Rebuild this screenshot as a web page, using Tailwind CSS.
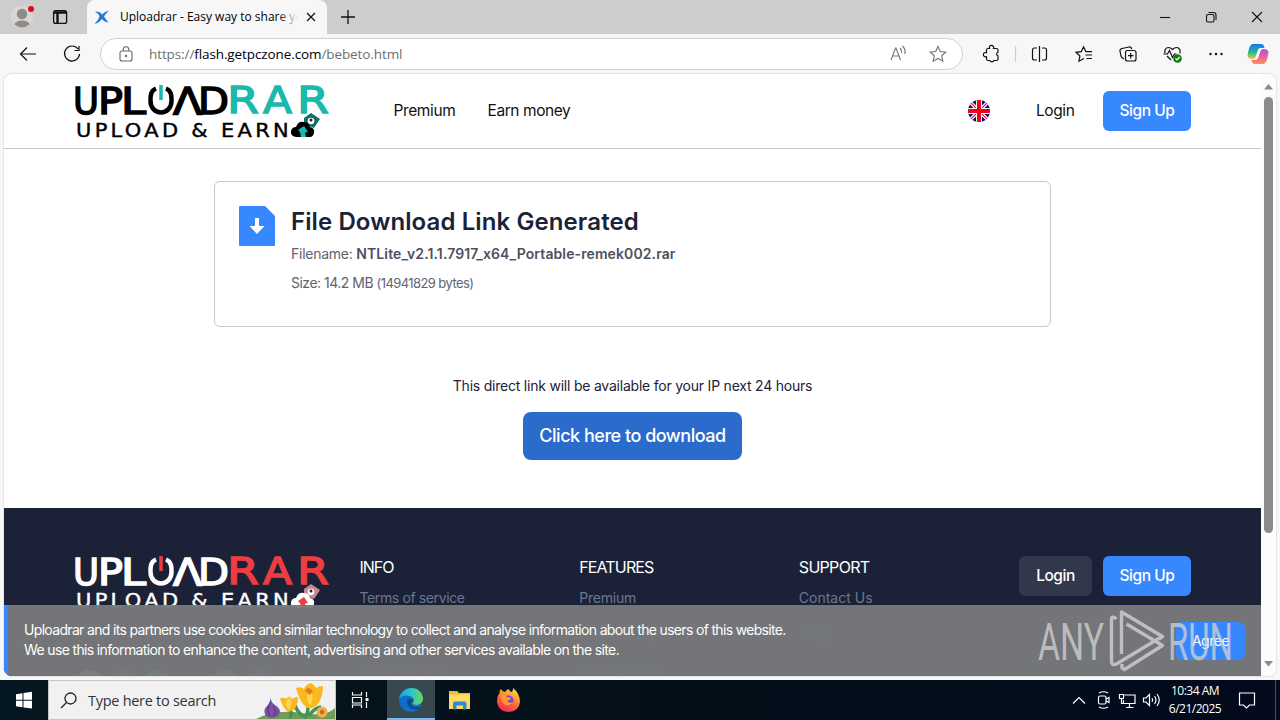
<!DOCTYPE html>
<html lang="en">
<head>
  <meta charset="UTF-8" />
  <meta name="viewport" content="width=device-width, initial-scale=1.0" />
  <title>Uploadrar - Easy way to share your files</title>
  <script src="https://cdn.jsdelivr.net/npm/@tailwindcss/browser@4"></script>
</head>
<body class="w-[1280px] h-[720px] overflow-hidden flex flex-col bg-[#f7f7f7] font-['Open_Sans',sans-serif] text-black">

  <!-- Tab strip -->
  <div class="h-[34px] shrink-0 bg-[#cdcdcd] flex items-center">
    <svg class="w-[87px] h-[34px] shrink-0" viewBox="0 0 87 34" fill="none">
      <circle cx="22" cy="17" r="11" fill="#d9d7d5" />
      <circle cx="22" cy="14" r="5.2" fill="#8f8b88" />
      <path d="M14.500 24.500a7.500 4 0 0 1 15 0q-3.500 3-7.500 3t-7.500-3z" fill="#8f8b88" />
      <circle cx="31" cy="9" r="3" fill="#e00b1c" />
      <rect x="53.600" y="10.600" width="13" height="12.800" rx="2" stroke="#111" stroke-width="1.300" />
      <path d="M54 12.500h12.500M57.500 13v10" stroke="#111" stroke-width="2.400" />
    </svg>
    <div class="w-[240px] h-[34px] bg-[#f7f7f7] rounded-t-lg flex items-center pl-[7px]">
      <svg class="w-4 h-4 shrink-0" viewBox="0 0 16 16">
        <path d="M1 2.500q5-.500 7 3Q10 3 15 1.500q-4 4-5 6 2 3 4.500 6-4.500-.500-6.500-3.500-3 4-7.500 5 4-4 5-7.500Q4 4 1 2.500z" fill="#2678d4" />
      </svg>
      <div class="relative w-[178px] ml-2.5 text-[12px] whitespace-nowrap overflow-hidden">
        Uploadrar - Easy way to share your
        <div class="absolute right-0 top-0 w-5 h-full bg-linear-to-r from-transparent to-[#f7f7f7]"></div>
      </div>
      <svg class="w-2.5 h-2.5 ml-2" viewBox="0 0 10 10" stroke="#111" stroke-width="1.200"><path d="M1 1l8 8M9 1l-8 8" /></svg>
    </div>
    <svg class="w-[14px] h-[14px] ml-[14px]" viewBox="0 0 14 14" stroke="#111" stroke-width="1.300"><path d="M0 7h14M7 0v14" /></svg>
    <svg class="w-[120px] h-[34px] ml-auto" viewBox="1160 0 120 34" fill="none" stroke="#111" stroke-width="1.100">
      <path d="M1160 17.500h10" />
      <rect x="1206.500" y="14.500" width="7.500" height="7.500" rx="1.500" />
      <path d="M1208.500 12.500h5q2.500 0 2.500 2.500v5" />
      <path d="M1252 12l10 10M1262 12l-10 10" />
    </svg>
  </div>

  <!-- Toolbar -->
  <div class="h-10 shrink-0 flex items-center">
    <svg class="w-[100px] h-10 shrink-0" viewBox="0 34 100 40" fill="none" stroke="#111" stroke-width="1.200">
      <path d="M36 54H20.500M27 47.500L20.500 54l6.500 6.500" />
      <path d="M78 49a7.500 7.500 0 1 0 1.500 5M79 46v4.500h-4.500" />
    </svg>
    <div class="w-[863px] h-8 bg-white border border-[#d2d2d2] rounded-full flex items-center px-[18px]">
      <svg class="w-[14px] h-4" viewBox="0 0 14 16" fill="none" stroke="#666" stroke-width="1.100">
        <rect x="1" y="5" width="12" height="10" rx="2" /><path d="M4.200 5V3.500a2.800 2.800 0 0 1 5.600 0V5" /><circle cx="7" cy="10" r=".6" fill="#555" />
      </svg>
      <div class="ml-4 text-[13.5px] tracking-[-0.1px] text-[#6f6f6f] whitespace-nowrap">https://<span class="text-black">flash.getpczone.com</span>/bebeto.html</div>
      <svg class="w-[60px] h-5 ml-auto mr-[-6px]" viewBox="890 44 60 20" fill="none" stroke="#777" stroke-width="1.150">
        <path d="M891 60l4.500-12h.5l4.500 12M892.800 56h6M900 48q2 2 1.500 5M902.500 46q3.500 3.500 2.300 8" />
        <path d="M938 46.500l2.300 5 5.400.600-4 3.700 1.100 5.400-4.800-2.700-4.800 2.700 1.100-5.400-4-3.700 5.400-.600z" />
      </svg>
    </div>
    <svg class="w-[317px] h-10 shrink-0" viewBox="963 34 317 40" fill="none" stroke="#111" stroke-width="1.200">
      <defs>
        <linearGradient id="cpA" x1="0" y1="0" x2="0" y2="1"><stop offset="0" stop-color="#1478e8" /><stop offset=".55" stop-color="#22b8a0" /><stop offset="1" stop-color="#ffc62b" /></linearGradient>
        <linearGradient id="cpB" x1="0" y1="0" x2="0" y2="1"><stop offset="0" stop-color="#a055ee" /><stop offset=".5" stop-color="#ed5f9c" /><stop offset="1" stop-color="#ff9254" /></linearGradient>
      </defs>
      <path d="M988 48.500h1.500a2.200 2.200 0 1 1 4 0h3q1.500 0 1.500 1.500v2.200a2 2 0 0 0 0 3.800v3q0 1.500-1.500 1.500h-2.600a2.200 2.200 0 0 1-4 0H988q-1.500 0-1.500-1.500v-2.300a2.200 2.200 0 1 1 0-4V50q0-1.500 1.500-1.500z" />
      <path d="M1015.500 46v16" stroke="#ccc" />
      <path d="M1037 48h-2.500q-2 0-2 2v8q0 2 2 2h2.500M1042 48h2.500q2 0 2 2v8q0 2-2 2h-2.500M1039.500 46v16" />
      <path d="M1084 58.500l-.5.200-4.600 2.500 1-5.200-3.900-3.700 5.300-.700 2.300-4.800 2.300 4.800 1 .1M1086.500 51.600h5.500M1085.500 55h6.500M1086.500 58.500h5.500" />
      <path d="M1124 59q-2.500-1-3-3l-1-5q-.3-2 2-2.500l7-1.500q2-.3 2.800 2" />
      <rect x="1125.500" y="50.500" width="10.500" height="10.500" rx="2" /><path d="M1130.700 53v5.500M1128 55.700h5.500" />
      <path d="M1171 60l-4-4M1165 53c-1-3 1-5.500 3.500-5.500 2 0 3 1 4 2 1-1 2-2 4-2 3 0 4.500 3 3.200 6M1163.500 54h4l2-3.500 3 7 2-3.500h2" />
      <circle cx="1177.500" cy="58.500" r="4.300" fill="#107c10" stroke="none" /><path d="M1175.500 58.500l1.500 1.500 2.700-3" stroke="#fff" />
      <g fill="#111" stroke="none"><circle cx="1210.500" cy="54" r="1.200" /><circle cx="1216" cy="54" r="1.200" /><circle cx="1221.500" cy="54" r="1.200" /></g>
      <path d="M1253 44h8q3 0 3.500 4h-4q-2 0-2.600 2l-2 6q-.8 3-3.500 3-4.500 0-4.800-3-.2-1.500 1.300-7 1.500-5 4.100-5z" fill="url(#cpA)" stroke="none" />
      <path d="M1263 64h-8q-3 0-3.500-4h4q2 0 2.600-2l2-6q.8-3 3.500-3 4.500 0 4.800 3 .2 1.500-1.300 7-1.500 5-4.100 5z" fill="url(#cpB)" stroke="none" />
    </svg>
  </div>

  <!-- Web page -->
  <div class="h-[602px] mx-1 shrink-0 flex bg-white rounded-lg overflow-hidden shadow-[0_0_2px_#bbb] font-[Inter,sans-serif]">
    <div class="relative w-[1257px] shrink-0 overflow-hidden">
      <header class="h-[75px] border-b border-[#c8c8c8] flex items-center pl-[70px] pr-[70px] text-[15.5px] text-[#111]">
        <svg class="w-[256px] h-[56px] shrink-0 overflow-visible" viewBox="74 83 256 56" font-family="DejaVu Sans">
          <g font-size="37" fill="#000" stroke="#000" stroke-width="1.500">
            <text x="73" y="113.500" textLength="26" lengthAdjust="spacingAndGlyphs">U</text>
            <text x="98" y="113.500" textLength="25" lengthAdjust="spacingAndGlyphs">P</text>
            <text x="121" y="113.500" textLength="25" lengthAdjust="spacingAndGlyphs">L</text>
            <text x="173" y="113.500" textLength="29" lengthAdjust="spacingAndGlyphs">Λ</text>
            <text x="198" y="113.500" textLength="31" lengthAdjust="spacingAndGlyphs">D</text>
          </g>
          <g font-size="37" fill="#19b9ad" stroke="#19b9ad" stroke-width="1.300">
            <text x="227" y="113" textLength="32" lengthAdjust="spacingAndGlyphs">R</text>
            <text x="263" y="113" textLength="29" lengthAdjust="spacingAndGlyphs">A</text>
            <text x="297" y="113" textLength="32" lengthAdjust="spacingAndGlyphs">R</text>
          </g>
          <path d="M156 88.500C150 91 150.500 97 150.500 101c0 7 5 11.500 10.500 11.500s10.500-4.500 10.500-11.500c0-4 .5-10-5.500-12.500" fill="none" stroke="#000" stroke-width="4.500" />
          <path d="M161 85v15" stroke="#19b9ad" stroke-width="3.500" />
          <text x="76" y="136.500" font-size="19" fill="#000" stroke="#000" stroke-width=".4" letter-spacing="3" textLength="216" lengthAdjust="spacingAndGlyphs">UPLOAD &amp; EARN</text>
          <path d="M304 118l7-5 9 6-6 9-10-4z" fill="#126e68" /><circle cx="311" cy="121" r="3.300" fill="#fff" /><circle cx="311" cy="120" r="1.500" fill="#222" />
          <path d="M296 137q-6-1-5-6 1-4 5-4 2-6 8-5 5 0 6 5 5 1 4 6-1 4-4 4z" fill="#000" />
          <path d="M298 130l6-4 4 6-3 .5 1 4.500h-5l-1-5z" fill="#19b9ad" />
        </svg>
        <nav class="flex gap-8 ml-[63.500px]">
          <a class="w-[62px] tracking-[-0.38px] whitespace-nowrap">Premium</a>
          <a class="tracking-[-0.42px]">Earn money</a>
        </nav>
        <svg class="w-[22px] h-[22px] ml-auto mr-[46px]" viewBox="0 0 22 22">
          <clipPath id="flag"><circle cx="11" cy="11" r="11" /></clipPath>
          <g clip-path="url(#flag)">
            <path d="M0 0h22v22H0z" fill="#10107c" />
            <path d="M0 0l22 22M22 0L0 22" stroke="#fff" stroke-width="3.400" /><path d="M0 0l22 22M22 0L0 22" stroke="#e8112d" stroke-width="1.200" />
            <path d="M11 0v22M0 11h22" stroke="#fff" stroke-width="6" /><path d="M11 0v22M0 11h22" stroke="#f00018" stroke-width="4" />
          </g>
        </svg>
        <a class="w-[39px] tracking-[-0.42px] whitespace-nowrap">Login</a>
        <a class="w-[88px] h-10 ml-7 rounded-md bg-[#3787ff] text-white font-medium tracking-[-0.45px] flex items-center justify-center">Sign Up</a>
      </header>

      <main class="h-[359px] pt-8 flex flex-col items-center text-[#1b2238]">
        <section class="w-[837px] h-[146px] border border-[#c5c8cc] rounded-md p-6 flex gap-4">
          <svg class="w-9 h-10 shrink-0" viewBox="0 0 36 40">
            <path d="M1 0h25l10 10v29q0 1-1 1H1q-1 0-1-1V1q0-1 1-1z" fill="#3787ff" />
            <path d="M16 12h4v8h5.500L18 28l-7.500-8H16z" fill="#fff" />
          </svg>
          <div class="text-[14px] text-[#5f6470] whitespace-nowrap">
            <h1 class="pt-px text-[24px] leading-[30px] font-semibold text-[#1b2238] tracking-[0.1px]">File Download Link Generated</h1>
            <p class="mt-[6px] leading-[22px] tracking-[-0.25px]">Filename: <b class="font-semibold text-[#4d515e] tracking-[0.11px]">NTLite_v2.1.1.7917_x64_Portable-remek002.rar</b></p>
            <p class="mt-[7px] leading-[22px] tracking-[-0.5px]">Size: 14.2 MB <span class="text-[13px] tracking-[-0.58px]">(14941829 bytes)</span></p>
          </div>
        </section>
        <p class="mt-12 text-[14px] leading-[21px] tracking-[-0.22px]">This direct link will be available for your IP next 24 hours</p>
        <a class="mt-4 w-[219px] h-12 pb-px rounded-lg bg-[#2b6bcc] text-white text-[18px] font-medium tracking-[-0.48px] flex items-center justify-center">Click here to download</a>
      </main>

      <footer class="h-[168px] bg-[#1b2238] pl-[70px] pr-[70px] pt-12 flex text-white">
        <div class="w-[256px] shrink-0">
          <svg class="w-[256px] h-[56px] mt-[-2px] overflow-visible" viewBox="74 83 256 56" font-family="DejaVu Sans">
            <g font-size="37" fill="#fff" stroke="#fff" stroke-width="1.500">
              <text x="73" y="113.500" textLength="26" lengthAdjust="spacingAndGlyphs">U</text>
              <text x="98" y="113.500" textLength="25" lengthAdjust="spacingAndGlyphs">P</text>
              <text x="121" y="113.500" textLength="25" lengthAdjust="spacingAndGlyphs">L</text>
              <text x="173" y="113.500" textLength="29" lengthAdjust="spacingAndGlyphs">Λ</text>
              <text x="198" y="113.500" textLength="31" lengthAdjust="spacingAndGlyphs">D</text>
            </g>
            <g font-size="37" fill="#ee3d42" stroke="#ee3d42" stroke-width="1.300">
              <text x="227" y="113" textLength="32" lengthAdjust="spacingAndGlyphs">R</text>
              <text x="263" y="113" textLength="29" lengthAdjust="spacingAndGlyphs">A</text>
              <text x="297" y="113" textLength="32" lengthAdjust="spacingAndGlyphs">R</text>
            </g>
            <path d="M156 88.500C150 91 150.500 97 150.500 101c0 7 5 11.500 10.500 11.500s10.500-4.500 10.500-11.500c0-4 .5-10-5.500-12.500" fill="none" stroke="#fff" stroke-width="4.500" />
            <path d="M161 85v15" stroke="#ee3d42" stroke-width="3.500" />
            <text x="76" y="136" font-size="19" fill="#fff" stroke="#fff" stroke-width=".4" letter-spacing="3" textLength="216" lengthAdjust="spacingAndGlyphs">UPLOAD &amp; EARN</text>
            <path d="M304 118l7-5 9 6-6 9-10-4z" fill="#c58a90" /><circle cx="311" cy="121" r="3.300" fill="#fff" /><circle cx="311" cy="120" r="1.500" fill="#222" />
            <path d="M296 137q-6-1-5-6 1-4 5-4 2-6 8-5 5 0 6 5 5 1 4 6-1 4-4 4z" fill="#fff" />
            <path d="M298 130l6-4 4 6-3 .5 1 4.500h-5l-1-5z" fill="#ee3d42" />
          </svg>
          <div class="flex gap-[6px] pl-px mt-[60px]">
            <span class="w-7 h-7 rounded-full bg-[#e8ecf4]"></span>
            <span class="w-7 h-7 rounded-full bg-[#ff3b30]"></span>
            <span class="w-7 h-7 rounded-full bg-[#2bd98c]"></span>
            <span class="w-7 h-7 rounded-full bg-[#20283f]"></span>
            <span class="w-7 h-7 rounded-full bg-[#5aa7e8]"></span>
            <span class="w-7 h-7 rounded-full bg-[#3787ff]"></span>
          </div>
        </div>
        <div class="w-[660px] ml-[29.500px] mt-[-1px] mr-[0.500px] grid grid-cols-3 text-[16px] leading-6 whitespace-nowrap">
          <div>
            <h2 class="tracking-[-1px]">INFO</h2>
            <ul class="mt-2 text-[14px] leading-[22px] space-y-[15px] text-[#6d768e] tracking-[-0.38px]"><li>Terms of service</li><li>DMCA</li><li>Privacy Policy</li></ul>
          </div>
          <div>
            <h2 class="tracking-[-0.85px]">FEATURES</h2>
            <ul class="mt-2 text-[14px] leading-[22px] space-y-[15px] text-[#6d768e] tracking-[-0.2px]"><li>Premium</li><li>Earn money</li><li>Link Checker</li></ul>
          </div>
          <div>
            <h2 class="tracking-[-0.7px]">SUPPORT</h2>
            <ul class="mt-2 text-[14px] leading-[22px] space-y-[15px] text-[#6d768e]"><li>Contact Us</li><li>FAQ</li></ul>
          </div>
        </div>
        <div class="flex gap-[11px] ml-auto text-[15.5px] font-medium whitespace-nowrap">
          <a class="w-[73px] h-10 rounded-md bg-[#31384c] tracking-[-0.45px] flex items-center justify-center">Login</a>
          <a class="w-[88px] h-10 rounded-md bg-[#3787ff] tracking-[-0.45px] flex items-center justify-center">Sign Up</a>
        </div>
      </footer>

      <!-- Cookie notice -->
      <div class="absolute left-0 bottom-0 w-full h-[71px] bg-[#77797b]/96 border-l-4 border-[#3787ff] flex items-center pl-4 pr-4 text-white">
        <p class="pb-px text-[14px] leading-5 tracking-[-0.67px] whitespace-nowrap">Uploadrar and its partners use cookies and similar technology to collect and analyse information about the users of this website.<br /><span class="tracking-[-0.64px]">We use this information to enhance the content, advertising and other services available on the site.</span></p>
        <a class="w-[69px] h-[38px] ml-auto rounded-md bg-[#3787ff] text-[14px] tracking-[-0.5px] flex items-center justify-center">Agree</a>
      </div>
      <svg class="absolute left-[1031px] bottom-0 w-[210px] h-[71px]" viewBox="1035 605 210 71" font-family="Roboto" font-weight="400" font-size="51" fill="#d3d3d3" fill-opacity=".75">
        <text x="1038" y="659.500" textLength="66" lengthAdjust="spacingAndGlyphs">ANY</text>
        <text x="1168" y="659.500" textLength="65" lengthAdjust="spacingAndGlyphs">RUN</text>
        <g fill="none" stroke="#bfbfbf" stroke-width="3.400" stroke-linejoin="round">
          <path d="M1116.500 619q-5-4-5 1v41q0 5 5 3l43-26" />
          <path d="M1121.500 654v-42l41 24.500-3.500 2.500" />
          <path d="M1126.500 624l36 21.500-38 24-2.500-1.500v-4" />
        </g>
      </svg>
    </div>
    <!-- Scrollbar -->
    <svg class="w-[15px] h-[602px] shrink-0 bg-[#fcfcfc]" viewBox="1261 74 15 602" fill="#8b8b8b">
      <path d="M1264 89.500l4.500-5.500 4.500 5.500zM1264 661l4.500 5.500 4.500-5.500z" />
      <rect x="1264" y="97" width="9" height="436" rx="4.500" />
    </svg>
  </div>
  <div class="h-1 shrink-0"></div>

  <!-- Taskbar -->
  <div class="h-10 shrink-0 flex items-center bg-linear-to-r from-[#04161f] via-[#031019] to-[#020a1c] text-white">
    <svg class="w-12 h-10" viewBox="0 680 48 40" fill="#fff"><path d="M16 694.200l6.500-1v6.500H16zM23.500 693l8.500-1.200v7.900h-8.500zM16 700.700h6.500v6.500l-6.500-1zM23.500 700.700H32v7.900l-8.500-1.200z" /></svg>
    <div class="w-[288px] h-10 bg-[#f1f1f1] border border-[#c6c6c6] flex items-center pl-[11px] text-[#333] text-[14.5px]">
      <svg class="w-[17px] h-[17px]" viewBox="0 0 17 17" fill="none" stroke="#222" stroke-width="1.300"><circle cx="10.500" cy="6.500" r="5.500" /><path d="M6.500 10.500L1 16" /></svg>
      <span class="ml-[11px] pt-0.5 tracking-[-0.28px] whitespace-nowrap">Type here to search</span>
      <svg class="w-[79px] h-[38px] ml-auto" viewBox="257 681 79 38">
        <path d="M257 719q20-10 45-6t34-5v11z" fill="#719b58" />
        <path d="M271 697q1 5 5 8 8 5 3 11-7 4-12 0-4-6 2-11 3-3 2-8z" fill="#79529f" /><path d="M271 702q-4 8 0 14M274 706q4 5 1 10" stroke="#54307d" fill="none" />
        <path d="M291 709q2 5 0 9M309 707q0 8-4 11M304 716q-6-4-8-11M310 716q5-8 12-9" stroke="#3f9455" stroke-width="3.500" fill="none" />
        <path d="M281 698q4-1 6 1 3-5 6 0 3-2 6-2 0 8-4 13l-6 2q-6-5-8-14z" fill="#f9b91e" /><path d="M290 697l3 6-3 7-4-6z" fill="#f9d654" />
        <path d="M297 688q5-2 8 1 2-5 7-6 4 2 5 5 3-2 7-2 0 11-5 18-4 5-11 4-8-7-11-20z" fill="#f9b91e" /><path d="M311 690q5 7 0 16-6-8 0-16z" fill="#ffd84d" /><path d="M306 691q3-6 8 0l-3 4z" fill="#e37b18" />
        <circle cx="323" cy="712" r="5.500" fill="#f3ae45" /><circle cx="323" cy="712" r="2.200" fill="#c56c1d" />
      </svg>
    </div>
    <svg class="w-[51px] h-10" viewBox="336 680 51 40" fill="none" stroke="#fff" stroke-width="1.200">
      <path d="M352.500 692v3h9v-3M352.500 708v-3h9v3M352.500 697.500h9v5.500h-9zM366.500 692v5M366.500 702v6" /><path d="M365.500 698h3v3h-3z" fill="#fff" stroke="none" />
    </svg>
    <div class="w-12 h-10 bg-[#38484f] border-b-2 border-[#76b9ed] flex items-center justify-center">
      <svg class="w-6 h-6 mt-0.5" viewBox="0 0 24 24">
        <defs>
          <linearGradient id="edgeTop" x1="0" x2="1"><stop offset="0" stop-color="#1b9de2" /><stop offset=".5" stop-color="#2fc4d0" /><stop offset="1" stop-color="#64d95a" /></linearGradient>
        </defs>
        <path d="M0 11.500C2 7 6 5.500 9 6c3.500.5 5 3 5 5-2 1-2 3-.5 4.500 2 2 6 2.300 9.500.5C21 21 17 24 12 24 5 24 0 18.500 0 11.500z" fill="#0f6fc6" />
        <path d="M0 11.500C1 4.500 6 0 12.500 0 19 0 24 5 24 10.500c0 4-3 6.500-6.500 6.500-3 0-4.500-1.200-4-2.200 1.700-1.500 1.500-3.800 0-5.300C10 6.500 3 6.500 0 11.500z" fill="url(#edgeTop)" />
        <path d="M8 13c0 6 5 9 10 8.300 1.500-.3 3-1.300 4-3.300-3 1.500-8 1.500-9.500-1-.8-1.700-.6-3 .5-5.500-2-1-5-.5-5 1.500z" fill="#0b4a92" />
      </svg>
    </div>
    <svg class="w-[98px] h-10" viewBox="435 680 98 40">
      <path d="M449 691h8l2 2h11v16h-21z" fill="#f5b93a" /><path d="M449 694.500h21V709h-21z" fill="#ffd965" />
      <path d="M453 709.500v-6q0-2 2-2h9.500q2 0 2 2v6H463v-4h-6.500v4z" fill="#2d8bd4" />
      <defs><linearGradient id="ff" x1=".8" y1="0" x2=".3" y2="1"><stop offset="0" stop-color="#ffe14a" /><stop offset=".5" stop-color="#ff7b2b" /><stop offset="1" stop-color="#f5205e" /></linearGradient></defs>
      <path d="M499.500 693q0-3 1.500-4 1.500 3 4 3 1.500-2.500 4-3 0 2 2 3 2 0 2-4 7 5.500 7 14-1 9.500-11.500 10-10.500-.5-11.500-10 0-6 2.500-9z" fill="url(#ff)" />
      <circle cx="508.500" cy="700.500" r="5" fill="#7542e5" /><path d="M501 695q4-1 6 2 4 0 4 1.500-1 2-4 2.500 2 3 6 1-2 4-7 3-5-2-5-10z" fill="#ff9a2c" />
    </svg>
    <svg class="w-[105px] h-10 ml-auto" viewBox="1061 680 105 40" fill="none" stroke="#fff" stroke-width="1.200">
      <path d="M1073 703.500l6-6 6 6" />
      <rect x="1098.500" y="696" width="7.500" height="8" rx="1.500" /><path d="M1106 699l3-1.500v5l-3-1.500M1099 693q4.500-2.500 9 0M1099 707q4.500 2.500 9 0" />
      <path d="M1124.500 695H1135v8.500h-11.500V700M1129.500 703.500v4M1126 707.500h7.500M1119.500 694.500h4v4h-4zM1121.500 698.500v5h3" />
      <path d="M1143.500 698h2.500l3.500-3.500v11l-3.500-3.500h-2.500zM1152 698q1.500 2 0 4M1154.500 696q3 4 0 8M1157 694q4.500 6 0 12" />
    </svg>
    <div class="w-[58px] text-center text-[12px] leading-[18px] tracking-[-0.5px] whitespace-nowrap">10:34 AM<br />6/21/2025</div>
    <svg class="w-[56px] h-10" viewBox="1224 680 56 40" fill="none" stroke="#fff" stroke-width="1.200"><path d="M1239.500 693h15v12h-5l-3 3-3-3h-4z" /><path d="M1275.500 680v40" stroke="#444b58" /></svg>
  </div>
</body>
</html>
